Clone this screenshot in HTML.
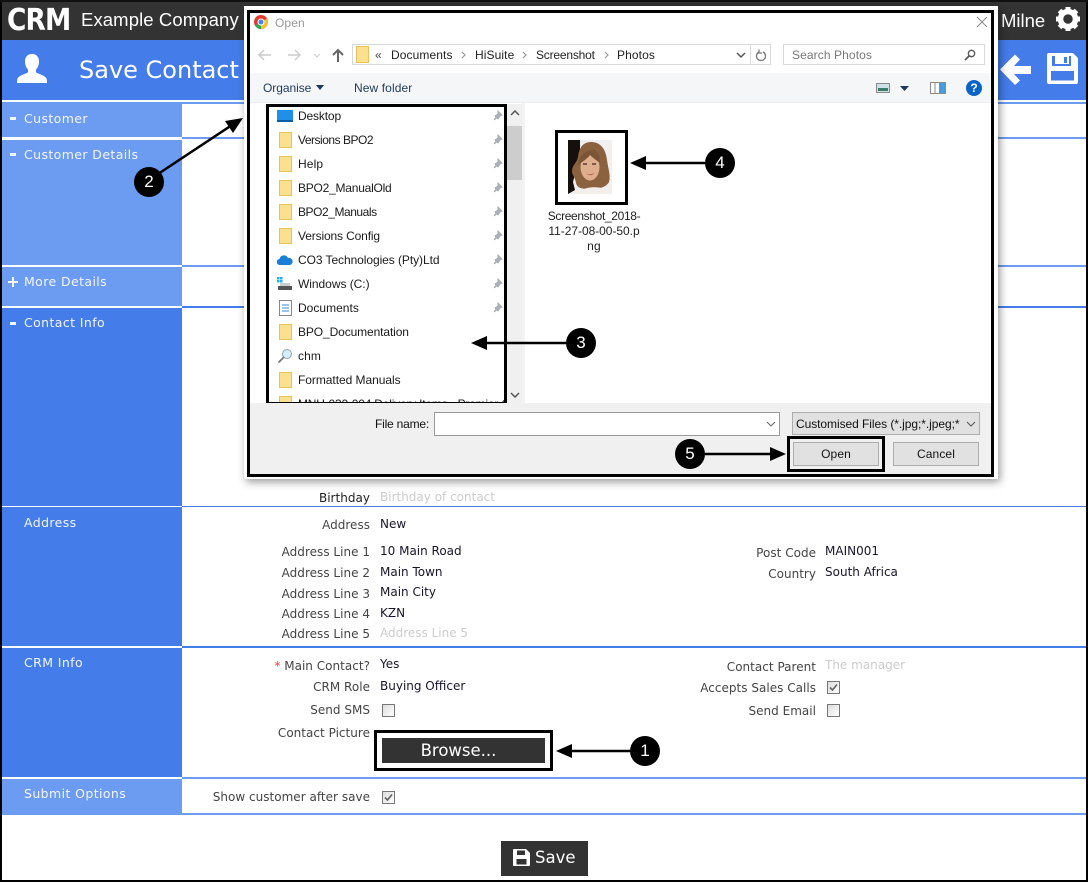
<!DOCTYPE html>
<html><head><meta charset="utf-8"><style>
html,body{margin:0;padding:0;background:#fff}
#p{position:relative;width:1088px;height:882px;overflow:hidden;background:#fff;font-family:"DejaVu Sans",sans-serif}
#p div,#p span.a,#p svg.a{position:absolute}
.b{left:2px;width:180px;background:#6c9bf2}
.d{background:#447ce9}
.h{left:182px;width:904px;height:2px}
.s{left:24px;color:#f2f5ff;font-size:12.5px;line-height:16px;white-space:nowrap;letter-spacing:.4px}
.m{left:10px;width:6px;height:2.500px;background:#f2f5ff}
.l{right:718px;color:#444;font-size:12px;line-height:16px;white-space:nowrap;text-align:right;letter-spacing:.02px}
.r{right:272px}
.v{left:380px;color:#16162a;font-size:12px;line-height:16px;white-space:nowrap}
.w{left:825px}
.g{color:#ccc}
.c{width:11px;height:11px;border:1px solid #777;background:linear-gradient(135deg,#ddd,#fff)}
.n{left:298px;font-family:"Liberation Sans",sans-serif;font-size:12px;line-height:16px;color:#1a1a1a;white-space:nowrap;letter-spacing:.13px}
.f{left:279px;width:13px;height:16px;background:#fbe08f;border:1px solid #e8c05c;box-sizing:border-box}
.t{font-family:"Liberation Sans",sans-serif;font-size:12px;line-height:16px;white-space:nowrap;letter-spacing:.1px}
.box{border:3px solid #000;box-sizing:border-box}
.btn{background:#e1e1e1;border:1px solid #adadad;box-sizing:border-box;text-align:center;font-family:"Liberation Sans",sans-serif;font-size:12px;line-height:22px;color:#111;letter-spacing:.1px}
.num{width:30px;height:30px;border-radius:50%;background:#000;color:#fff;text-align:center;font-family:"Liberation Sans",sans-serif;font-size:17px;line-height:30px}
</style></head><body><div id="p">

<!-- header -->
<div style="left:0;top:0;width:1088px;height:40px;background:#333"></div>
<div style="left:7px;top:6px;color:#fff;font-size:30px;line-height:30px;font-weight:bold;letter-spacing:-1px;transform:scaleX(.88);transform-origin:left">CRM</div>
<div style="left:81px;top:8px;color:#fff;font-family:'Liberation Sans',sans-serif;font-size:18.500px;line-height:24px;white-space:nowrap;letter-spacing:.1px">Example Company</div>
<div style="left:1001px;top:9px;color:#fff;font-family:'Liberation Sans',sans-serif;font-size:18.500px;line-height:24px">Milne</div>
<svg class="a" style="left:1055px;top:6px" width="26" height="26" viewBox="0 0 26 26"><circle cx="13" cy="13" r="7.500" fill="none" stroke="#fff" stroke-width="5.500"/><g stroke="#fff" stroke-width="5"><path d="M13 1v5M13 20v5M1 13h5M20 13h5M4.500 4.500l3.500 3.500M18 18l3.500 3.500M21.500 4.500L18 8M8 18l-3.500 3.500"/></g></svg>

<!-- title bar -->
<div style="left:0;top:40px;width:1088px;height:60px;background:#447ce9"></div>
<svg class="a" style="left:16px;top:53px" width="32" height="31" viewBox="0 0 32 31"><path fill="#fff" d="M16 1c4.500 0 7 3 7 7.500 0 3-1 6-3 8v2.500c0 1.500 9 3 10.500 6.500 0.400 1 0.500 3 0.500 4.500H1c0-1.500 0.100-3.500 0.500-4.500C3 22 12 20.500 12 19v-2.500c-2-2-3-5-3-8C9 4 11.500 1 16 1z"/></svg>
<div style="left:79px;top:53px;color:#fff;font-size:24px;line-height:34px;white-space:nowrap">Save Contact</div>
<svg class="a" style="left:999px;top:53px" width="33" height="33" viewBox="0 0 33 33"><path fill="#fff" d="M1 16.500L16 1.500l5 5-6 6.500h17v8H15l6 6.500-5 4.500z"/></svg>
<svg class="a" style="left:1046px;top:52px" width="33" height="33" viewBox="0 0 33 33"><path fill="#fff" fill-rule="evenodd" d="M3 1h24l5 5v24a2 2 0 0 1-2 2H3a2 2 0 0 1-2-2V3a2 2 0 0 1 2-2zM6 4v10h19V4h-2v8H9V4zM18 5v6h3V5zM5 19v9.500h23V19z"/></svg>

<!-- left panel -->
<div style="left:0;top:0;width:2px;height:882px;background:#000"></div>
<div style="left:1086px;top:0;width:2px;height:882px;background:#000"></div>
<div style="left:0;top:0;width:1088px;height:2px;background:#111"></div>
<div style="left:0;top:880px;width:1088px;height:2px;background:#000"></div>

<div class="b" style="top:102px;height:35px"></div>
<div class="b" style="top:140px;height:125px"></div>
<div class="b" style="top:267px;height:39px"></div>
<div class="b d" style="top:308px;height:198px"></div>
<div class="b d" style="top:507px;height:139px"></div>
<div class="b d" style="top:648px;height:129px"></div>
<div class="b" style="top:779px;height:36px"></div>

<div class="h" style="top:102px;background:#6c9bf2"></div>
<div class="h" style="top:137px;background:#6c9bf2"></div>
<div class="h" style="top:265px;background:#6c9bf2"></div>
<div class="h" style="top:306px;background:#447ce9"></div>
<div class="h" style="top:506px;height:1px;background:#447ce9"></div>
<div class="h" style="top:646px;background:#447ce9"></div>
<div class="h" style="top:777px;background:#6c9bf2"></div>
<div class="h" style="top:813px;background:#6c9bf2"></div>

<div class="m" style="top:117px"></div><div class="s" style="top:111px">Customer</div>
<div class="m" style="top:153px"></div><div class="s" style="top:147px">Customer Details</div>
<div class="m" style="left:8px;width:10px;top:281px;height:2px"></div><div class="m" style="left:12px;width:2px;top:277px;height:10px"></div><div class="s" style="top:274px">More Details</div>
<div class="m" style="top:322px"></div><div class="s" style="top:315px">Contact Info</div>
<div class="s" style="top:515px">Address</div>
<div class="s" style="top:655px">CRM Info</div>
<div class="s" style="top:786px">Submit Options</div>

<!-- form -->
<div class="l" style="top:490px;color:#222">Birthday</div><div class="v g" style="top:489px">Birthday of contact</div>
<div class="l" style="top:517px">Address</div><div class="v" style="top:516px">New</div>
<div class="l" style="top:544px">Address Line 1</div><div class="v" style="top:543px">10 Main Road</div>
<div class="l" style="top:565px">Address Line 2</div><div class="v" style="top:564px">Main Town</div>
<div class="l" style="top:586px">Address Line 3</div><div class="v" style="top:584px">Main City</div>
<div class="l" style="top:606px">Address Line 4</div><div class="v" style="top:605px">KZN</div>
<div class="l" style="top:626px">Address Line 5</div><div class="v g" style="top:625px">Address Line 5</div>
<div class="l r" style="top:545px">Post Code</div><div class="v w" style="top:543px">MAIN001</div>
<div class="l r" style="top:566px">Country</div><div class="v w" style="top:564px">South Africa</div>

<div class="l" style="top:658px"><span style="color:#f33">*</span> Main Contact?</div><div class="v" style="top:656px">Yes</div>
<div class="l" style="top:679px">CRM Role</div><div class="v" style="top:678px">Buying Officer</div>
<div class="l" style="top:702px">Send SMS</div><div class="c" style="left:382px;top:704px"></div>
<div class="l" style="top:725px">Contact Picture</div>
<div class="l r" style="top:659px">Contact Parent</div><div class="v w g" style="top:657px">The manager</div>
<div class="l r" style="top:680px">Accepts Sales Calls</div>
<div class="c" style="left:827px;top:681px"></div><svg class="a" style="left:828px;top:682px" width="11" height="11" viewBox="0 0 11 11"><path d="M2 5.500l2.500 2.500L9 2.500" fill="none" stroke="#666" stroke-width="1.700"/></svg>
<div class="l r" style="top:703px">Send Email</div><div class="c" style="left:827px;top:704px"></div>
<div class="l" style="top:789px">Show customer after save</div>
<div class="c" style="left:382px;top:791px"></div><svg class="a" style="left:383px;top:792px" width="11" height="11" viewBox="0 0 11 11"><path d="M2 5.500l2.500 2.500L9 2.500" fill="none" stroke="#666" stroke-width="1.700"/></svg>

<div class="box" style="left:374px;top:730px;width:179px;height:41px"></div>
<div style="left:382px;top:738px;width:163px;height:25px;background:#333"></div>
<div style="left:382px;top:738px;width:153px;height:25px;color:#fff;text-align:center;font-size:16.500px;line-height:26px">Browse...</div>

<div style="left:501px;top:841px;width:87px;height:35px;background:#333"></div>
<svg class="a" style="left:513px;top:849px" width="17" height="17" viewBox="0 0 17 17"><path fill="#fff" fill-rule="evenodd" d="M1 0h12l4 4v12a1 1 0 0 1-1 1H1a1 1 0 0 1-1-1V1a1 1 0 0 1 1-1zM4 1.500V6h8V1.500zM3.500 10v5.500h10V10z"/></svg>
<div style="left:535px;top:848px;color:#fff;font-size:16.500px;line-height:20px">Save</div>

<!-- dialog -->
<div style="left:244px;top:6px;width:754px;height:473px;background:#fff;box-shadow:2px 3px 8px rgba(0,0,0,.4)"></div>
<svg class="a" style="left:253px;top:14px" width="16" height="16" viewBox="0 0 16 16"><circle cx="8" cy="8" r="7" fill="#e33b2e"/><path d="M8 8L2 11.500A7 7 0 0 0 8 15z" fill="#34a853"/><path d="M8 8l6-3.500A7 7 0 0 1 8 15z" fill="#fbc02d"/><circle cx="8" cy="8" r="3.500" fill="#fff"/><circle cx="8" cy="8" r="2.500" fill="#4285f4"/></svg>
<div class="t" style="left:275px;top:15px;color:#999">Open</div>
<svg class="a" style="left:976px;top:16px" width="12" height="12" viewBox="0 0 12 12"><path d="M1 1l10 10M11 1L1 11" stroke="#888" fill="none"/></svg>

<svg class="a" style="left:257px;top:48px" width="90" height="15" viewBox="0 0 90 15"><g fill="none" stroke="#ccc" stroke-width="1.500"><path d="M2 7h12M7 2L2 7l5 5"/><path d="M31 7h12M38 2l5 5-5 5"/><path d="M57 6l3 3 3-3" stroke-width="1"/></g><path d="M81 14V2M76 7l5-5 5 5" fill="none" stroke="#666" stroke-width="2"/></svg>
<div style="left:352px;top:44px;width:419px;height:21px;border:1px solid #d9d9d9;box-sizing:border-box"></div>
<div style="left:750px;top:45px;width:1px;height:19px;background:#d9d9d9"></div>
<div class="f" style="left:356px;top:46px;height:17px"></div>
<div class="t" style="left:375px;top:47px;color:#444">«</div>
<div class="t" style="left:391px;top:47px;color:#222">Documents</div>
<div class="t" style="left:475px;top:47px;color:#222">HiSuite</div>
<div class="t" style="left:536px;top:47px;color:#222;letter-spacing:-.2px">Screenshot</div>
<div class="t" style="left:617px;top:47px;color:#222">Photos</div>
<svg class="a" style="left:461px;top:50px" width="180" height="10" viewBox="0 0 180 10"><g fill="none" stroke="#999" stroke-width="1.200"><path d="M1 2l3 3-3 3M62 2l3 3-3 3M144 2l3 3-3 3"/></g></svg>
<svg class="a" style="left:736px;top:49px" width="30" height="14" viewBox="0 0 30 14"><path d="M1 4l4 4 4-4" fill="none" stroke="#555" stroke-width="1.500"/><path d="M23 3a4.500 4.500 0 1 0 4 0M23 0.500V4h3" fill="none" stroke="#777" stroke-width="1.300"/></svg>
<div style="left:783px;top:44px;width:202px;height:21px;border:1px solid #d9d9d9;box-sizing:border-box"></div>
<div class="t" style="left:792px;top:47px;color:#777">Search Photos</div>
<svg class="a" style="left:964px;top:49px" width="12" height="12" viewBox="0 0 12 12"><circle cx="7.500" cy="4.500" r="3.200" fill="none" stroke="#555" stroke-width="1.300"/><path d="M5 7l-4 4" stroke="#555" stroke-width="1.600"/></svg>

<div style="left:250px;top:73px;width:741px;height:30px;background:#f5f6f7;border-bottom:1px solid #eee;box-sizing:border-box"></div>
<div class="t" style="left:263px;top:80px;color:#1c3a5e;letter-spacing:-.05px">Organise</div>
<svg class="a" style="left:316px;top:85px" width="8" height="5"><path d="M0 0h8L4 5z" fill="#1c3a5e"/></svg>
<div class="t" style="left:354px;top:80px;color:#1c3a5e">New folder</div>
<svg class="a" style="left:876px;top:83px" width="14" height="10"><rect x=".5" y=".5" width="13" height="9" fill="#cfe2e8" stroke="#888"/><rect x="2" y="5" width="10" height="3" fill="#3a7d6a"/></svg>
<svg class="a" style="left:900px;top:86px" width="9" height="5"><path d="M0 0h9L4.500 5z" fill="#1c3a5e"/></svg>
<svg class="a" style="left:930px;top:82px" width="16" height="12"><rect x=".5" y=".5" width="15" height="11" fill="#fff" stroke="#888"/><rect x="9" y="1" width="6" height="10" fill="#4a9be0"/><path d="M5 1v10" stroke="#888"/></svg>
<div style="left:966px;top:80px;width:16px;height:16px;border-radius:50%;background:#0a64c8;color:#fff;font-family:'Liberation Sans',sans-serif;font-weight:bold;font-size:12px;line-height:16px;text-align:center">?</div>

<!-- nav list -->
<div style="left:507px;top:104px;width:15px;height:299px;background:#f0f0f0"></div>
<div style="left:507px;top:126px;width:15px;height:54px;background:#cdcdcd"></div>
<div style="left:522px;top:103px;width:3px;height:300px;background:#f3f3f3"></div>
<svg class="a" style="left:510px;top:110px" width="10" height="6"><path d="M1 5l4-4 4 4" fill="none" stroke="#555" stroke-width="1.500"/></svg>
<svg class="a" style="left:510px;top:392px" width="10" height="6"><path d="M1 1l4 4 4-4" fill="none" stroke="#555" stroke-width="1.500"/></svg>

<svg class="a" style="left:277px;top:110px" width="16" height="12"><rect width="16" height="12" fill="#1f8fe8"/><rect y="10" width="16" height="2" fill="#0c5da8"/></svg>
<div class="n" style="top:108px;letter-spacing:-.15px">Desktop</div>
<div class="f" style="top:132px"></div><div class="n" style="top:132px;letter-spacing:-.49px">Versions BPO2</div>
<div class="f" style="top:156px"></div><div class="n" style="top:156px">Help</div>
<div class="f" style="top:180px"></div><div class="n" style="top:180px;letter-spacing:-.23px">BPO2_ManualOld</div>
<div class="f" style="top:204px"></div><div class="n" style="top:204px;letter-spacing:-.45px">BPO2_Manuals</div>
<div class="f" style="top:228px"></div><div class="n" style="top:228px;letter-spacing:-.14px">Versions Config</div>
<svg class="a" style="left:277px;top:255px" width="16" height="10" viewBox="0 0 16 10"><path d="M3 10a3 3 0 0 1-.500-6A4.500 4.500 0 0 1 11 3a3.500 3.500 0 0 1 2 7z" fill="#1a7fd8"/></svg>
<div class="n" style="top:252px;letter-spacing:-.07px">CO3 Technologies (Pty)Ltd</div>
<svg class="a" style="left:277px;top:277px" width="16" height="14" viewBox="0 0 16 14"><rect x="0" y="0" width="2.500" height="2.500" fill="#1fb0f0"/><rect x="3" y="0" width="2.500" height="2.500" fill="#1fb0f0"/><rect x="0" y="3" width="2.500" height="2.500" fill="#1fb0f0"/><rect x="3" y="3" width="2.500" height="2.500" fill="#1fb0f0"/><rect x="1" y="9" width="14" height="4" fill="#555"/><rect x="3" y="6" width="10" height="3" fill="#ccc"/></svg>
<div class="n" style="top:276px;letter-spacing:-.04px">Windows (C:)</div>
<svg class="a" style="left:279px;top:300px" width="13" height="16"><rect x=".5" y=".5" width="12" height="15" fill="#fff" stroke="#888"/><path d="M3 5h7M3 8h7M3 11h7" stroke="#3a8ad0"/></svg>
<div class="n" style="top:300px;letter-spacing:.02px">Documents</div>
<div class="f" style="top:324px"></div><div class="n" style="top:324px;letter-spacing:-.11px">BPO_Documentation</div>
<svg class="a" style="left:277px;top:348px" width="16" height="16" viewBox="0 0 16 16"><circle cx="10" cy="6" r="4.500" fill="#d5ecfa" stroke="#8aa"/><path d="M7 9l-5.500 5.500" stroke="#777" stroke-width="1.800"/></svg>
<div class="n" style="top:348px">chm</div>
<div class="f" style="top:372px"></div><div class="n" style="top:372px;letter-spacing:-.05px">Formatted Manuals</div>
<div style="left:269px;top:396px;width:235px;height:7px;overflow:hidden"><div class="f" style="left:10px;top:0"></div><div class="n" style="left:29px;top:0;letter-spacing:-.2px">MNU-030-004 Delivery Items - Premier G</div></div>

<svg class="a" style="left:492px;top:110px" width="11" height="210" viewBox="0 0 11 210"><g fill="#aab0b8" stroke="#aab0b8"><path d="M6 1l4 4-2 1-2 3-1-1-3 2 2-3-1-1 3-2z"/><path d="M6 25l4 4-2 1-2 3-1-1-3 2 2-3-1-1 3-2z"/><path d="M6 49l4 4-2 1-2 3-1-1-3 2 2-3-1-1 3-2z"/><path d="M6 73l4 4-2 1-2 3-1-1-3 2 2-3-1-1 3-2z"/><path d="M6 97l4 4-2 1-2 3-1-1-3 2 2-3-1-1 3-2z"/><path d="M6 121l4 4-2 1-2 3-1-1-3 2 2-3-1-1 3-2z"/><path d="M6 145l4 4-2 1-2 3-1-1-3 2 2-3-1-1 3-2z"/><path d="M6 169l4 4-2 1-2 3-1-1-3 2 2-3-1-1 3-2z"/><path d="M6 193l4 4-2 1-2 3-1-1-3 2 2-3-1-1 3-2z"/></g></svg>

<div class="box" style="left:266px;top:104px;width:241px;height:301px"></div>

<!-- file pane -->
<div class="box" style="left:555px;top:130px;width:73px;height:75px"></div>
<svg class="a" style="left:568px;top:140px" width="44" height="54" viewBox="0 0 44 54"><rect width="44" height="54" fill="#f2f0ee"/><path d="M0 0h12v26L7 34l-2 8 2 8-7 4z" fill="#15100e"/><path d="M23 2c10 0 15 8 16 18 1 8 4 16 2 22-3 6-12 7-20 7-7 0-12-1-13-6-1-6-4-8-4-12 0-6 5-8 6-14C11 9 14 2 23 2z" fill="#8a6240"/><path d="M12 51c5-4 18-5 24-2l2 5H10z" fill="#f3eee9"/><ellipse cx="22" cy="27" rx="9.500" ry="13.500" fill="#dfae8e"/><path d="M27 10c-8-1-16 5-17 15 4-3 9-6 12-10 3 3 6 5 10 8 0-6-1-10-5-13z" fill="#7c5535"/><path d="M15 24h4M24 24h4" stroke="#40281c" stroke-width="1.300"/><path d="M18 33c2 2 6 2 8-.5-1 3.500-6 3.500-8 .5z" fill="#a04b40"/></svg>
<div class="t" style="left:534px;top:208px;width:120px;text-align:center;color:#222;letter-spacing:-.35px">Screenshot_2018-</div>
<div class="t" style="left:534px;top:223px;width:120px;text-align:center;color:#222;letter-spacing:-.04px">11-27-08-00-50.p</div>
<div class="t" style="left:534px;top:238px;width:120px;text-align:center;color:#222;letter-spacing:.15px">ng</div>

<!-- bottom area -->
<div style="left:250px;top:403px;width:741px;height:71px;background:#f0f0f0"></div>
<div class="t" style="left:375px;top:416px;color:#111;letter-spacing:-.2px">File name:</div>
<div style="left:434px;top:412px;width:346px;height:24px;background:#fff;border:1px solid #999;box-sizing:border-box"></div>
<svg class="a" style="left:766px;top:421px" width="10" height="6"><path d="M1 1l4 4 4-4" fill="none" stroke="#666"/></svg>
<div style="left:792px;top:412px;width:188px;height:23px;background:#e1e1e1;border:1px solid #adadad;box-sizing:border-box"></div>
<div class="t" style="left:796px;top:416px;color:#111;letter-spacing:-.06px">Customised Files (*.jpg;*.jpeg;*</div>
<svg class="a" style="left:966px;top:421px" width="10" height="6"><path d="M1 1l4 4 4-4" fill="none" stroke="#555"/></svg>
<div class="btn" style="left:793px;top:442px;width:86px;height:24px">Open</div>
<div class="btn" style="left:893px;top:442px;width:86px;height:24px">Cancel</div>
<div class="box" style="left:787px;top:436px;width:98px;height:36px"></div>

<div class="box" style="left:247px;top:10px;width:747px;height:467px"></div>

<!-- callouts -->
<svg class="a" style="left:0;top:0" width="1088" height="882" viewBox="0 0 1088 882"><g stroke="#000" stroke-width="2.500" fill="#000"><path d="M630 751H570"/><path d="M705 454H772"/><path d="M566 343H485"/><path d="M705 163H645"/><path d="M155 176L232 125"/></g><g fill="#000"><path d="M556 751l16-7v14z"/><path d="M786 454l-16-7v14z"/><path d="M471 343l16-7v14z"/><path d="M630 163l16-7v14z"/><path d="M243 118l-18 3 8 12z"/></g></svg>
<div class="num" style="left:630px;top:736px">1</div>
<div class="num" style="left:134px;top:167px">2</div>
<div class="num" style="left:566px;top:328px">3</div>
<div class="num" style="left:705px;top:148px">4</div>
<div class="num" style="left:675px;top:439px">5</div>
</div></body></html>
